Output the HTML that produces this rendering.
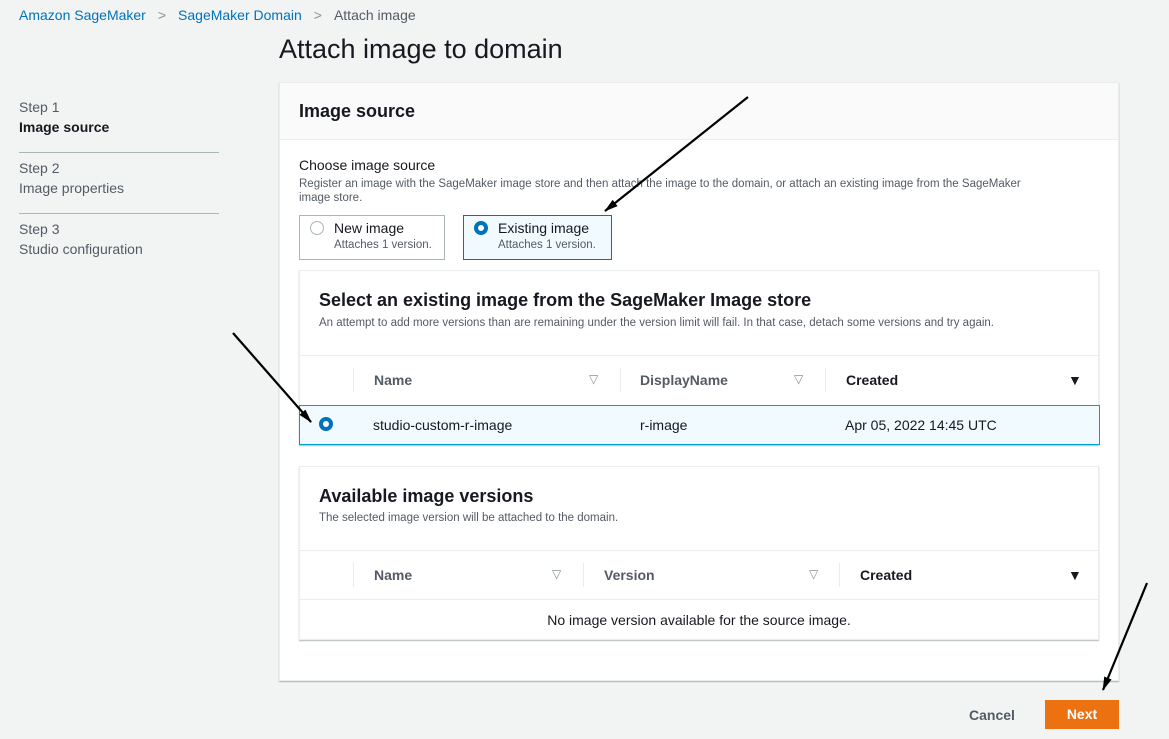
<!DOCTYPE html>
<html><head><style>
*{box-sizing:border-box;margin:0;padding:0}
body{width:1169px;height:739px;background:#f2f3f3;font-family:"Liberation Sans",sans-serif;color:#16191f;position:relative;overflow:hidden;font-size:14px}
.a{position:absolute}
.link{color:#0073bb}
.muted{color:#545b64}
.card{position:absolute;background:#fff;border:1px solid #eaeded;box-shadow:0 1px 1px rgba(0,28,36,.3)}
.th{position:absolute;font-weight:bold;color:#545b64;font-size:14px}
.sep{position:absolute;width:1px;height:24px;background:#eaeded}
.tri{position:absolute;font-size:12px;color:#879596}
</style></head><body>
<div class="a" style="left:19px;top:7px;font-size:14px"><span class="link">Amazon SageMaker</span><span style="color:#879596;margin:0 12px">&gt;</span><span class="link">SageMaker Domain</span><span style="color:#879596;margin:0 12px">&gt;</span><span class="muted">Attach image</span></div>
<div class="a" style="left:279px;top:34px;font-size:27px">Attach image to domain</div>
<div class="a muted" style="left:19px;top:99px">Step 1</div>
<div class="a" style="left:19px;top:119px;font-weight:bold">Image source</div>
<div class="a" style="left:19px;top:152px;width:200px;height:1px;background:#aab7b8"></div>
<div class="a muted" style="left:19px;top:160px">Step 2</div>
<div class="a muted" style="left:19px;top:180px">Image properties</div>
<div class="a" style="left:19px;top:213px;width:200px;height:1px;background:#aab7b8"></div>
<div class="a muted" style="left:19px;top:221px">Step 3</div>
<div class="a muted" style="left:19px;top:241px">Studio configuration</div>

<div class="card" style="left:279px;top:82px;width:840px;height:599px">
 <div style="height:57px;background:#fafafa;border-bottom:1px solid #eaeded;padding:18px 19px;font-size:18px;font-weight:bold">Image source</div>
</div>
<div class="a" style="left:299px;top:157px">Choose image source</div>
<div class="a muted" style="left:299px;top:177px;font-size:11.5px;line-height:14px;width:790px">Register an image with the SageMaker image store and then attach the image to the domain, or attach an existing image from the SageMaker<br>image store.</div>
<div class="a" style="left:299px;top:215px;width:146px;height:45px;border:1px solid #aab7b8;background:#fff"></div>
<div class="a" style="left:310px;top:221px;width:14px;height:14px;border:1px solid #aab7b8;border-radius:50%;background:#fff"></div>
<div class="a" style="left:334px;top:220px">New image</div>
<div class="a muted" style="left:334px;top:239px;font-size:11.5px">Attaches 1 version.</div>
<div class="a" style="left:463px;top:215px;width:149px;height:45px;border:1px solid #0073bb;background:#f1faff"></div>
<div class="a" style="left:474px;top:221px;width:14px;height:14px;border:4px solid #0073bb;border-radius:50%;background:#fff"></div>
<div class="a" style="left:498px;top:220px">Existing image</div>
<div class="a muted" style="left:498px;top:239px;font-size:11.5px">Attaches 1 version.</div>

<div class="card" style="left:299px;top:270px;width:800px;height:175px"></div>
<div class="a" style="left:319px;top:290px;font-size:18px;font-weight:bold">Select an existing image from the SageMaker Image store</div>
<div class="a muted" style="left:319px;top:317px;font-size:11.5px">An attempt to add more versions than are remaining under the version limit will fail. In that case, detach some versions and try again.</div>
<div class="a" style="left:300px;top:355px;width:798px;height:1px;background:#eaeded"></div>
<div class="sep" style="left:353px;top:368px"></div><div class="th" style="left:374px;top:372px">Name</div><div class="tri" style="left:589px;top:372px">▽</div>
<div class="sep" style="left:620px;top:368px"></div><div class="th" style="left:640px;top:372px">DisplayName</div><div class="tri" style="left:794px;top:372px">▽</div>
<div class="sep" style="left:825px;top:368px"></div><div class="th" style="left:846px;top:372px;color:#16191f">Created</div><div class="a" style="left:1068px;top:372px;font-size:14px">▼</div>
<div class="a" style="left:299px;top:405px;width:801px;height:40px;background:#f1faff;border:1px solid #00a1c9"></div>
<div class="a" style="left:319px;top:417px;width:14px;height:14px;border:4px solid #0073bb;border-radius:50%;background:#fff"></div>
<div class="a" style="left:373px;top:417px">studio-custom-r-image</div>
<div class="a" style="left:640px;top:417px">r-image</div>
<div class="a" style="left:845px;top:417px">Apr 05, 2022 14:45 UTC</div>

<div class="card" style="left:299px;top:466px;width:800px;height:174px"></div>
<div class="a" style="left:319px;top:486px;font-size:18px;font-weight:bold">Available image versions</div>
<div class="a muted" style="left:319px;top:512px;font-size:11.5px">The selected image version will be attached to the domain.</div>
<div class="a" style="left:300px;top:550px;width:798px;height:1px;background:#eaeded"></div>
<div class="sep" style="left:353px;top:563px"></div><div class="th" style="left:374px;top:567px">Name</div><div class="tri" style="left:552px;top:567px">▽</div>
<div class="sep" style="left:583px;top:563px"></div><div class="th" style="left:604px;top:567px">Version</div><div class="tri" style="left:809px;top:567px">▽</div>
<div class="sep" style="left:839px;top:563px"></div><div class="th" style="left:860px;top:567px;color:#16191f">Created</div><div class="a" style="left:1068px;top:567px;font-size:14px">▼</div>
<div class="a" style="left:300px;top:599px;width:798px;height:1px;background:#eaeded"></div>
<div class="a" style="left:299px;top:612px;width:800px;text-align:center;color:#16191f">No image version available for the source image.</div>

<div class="a muted" style="left:969px;top:707px;font-weight:bold">Cancel</div>
<div class="a" style="left:1045px;top:700px;width:74px;height:29px;background:#ec7211;color:#fff;font-weight:bold;text-align:center;line-height:29px">Next</div>

<svg class="a" style="left:0;top:0" width="1169" height="739">
<defs><marker id="m" markerWidth="14" markerHeight="8" refX="13" refY="4" orient="auto" markerUnits="userSpaceOnUse"><path d="M0,0 L14,4 L0,8 Z" fill="#000"/></marker></defs>
<g stroke="#000" stroke-width="2.2" marker-end="url(#m)">
<line x1="748" y1="97" x2="605" y2="211"/>
<line x1="233" y1="333" x2="311" y2="422"/>
<line x1="1147" y1="583" x2="1103" y2="690"/>
</g></svg>
</body></html>
